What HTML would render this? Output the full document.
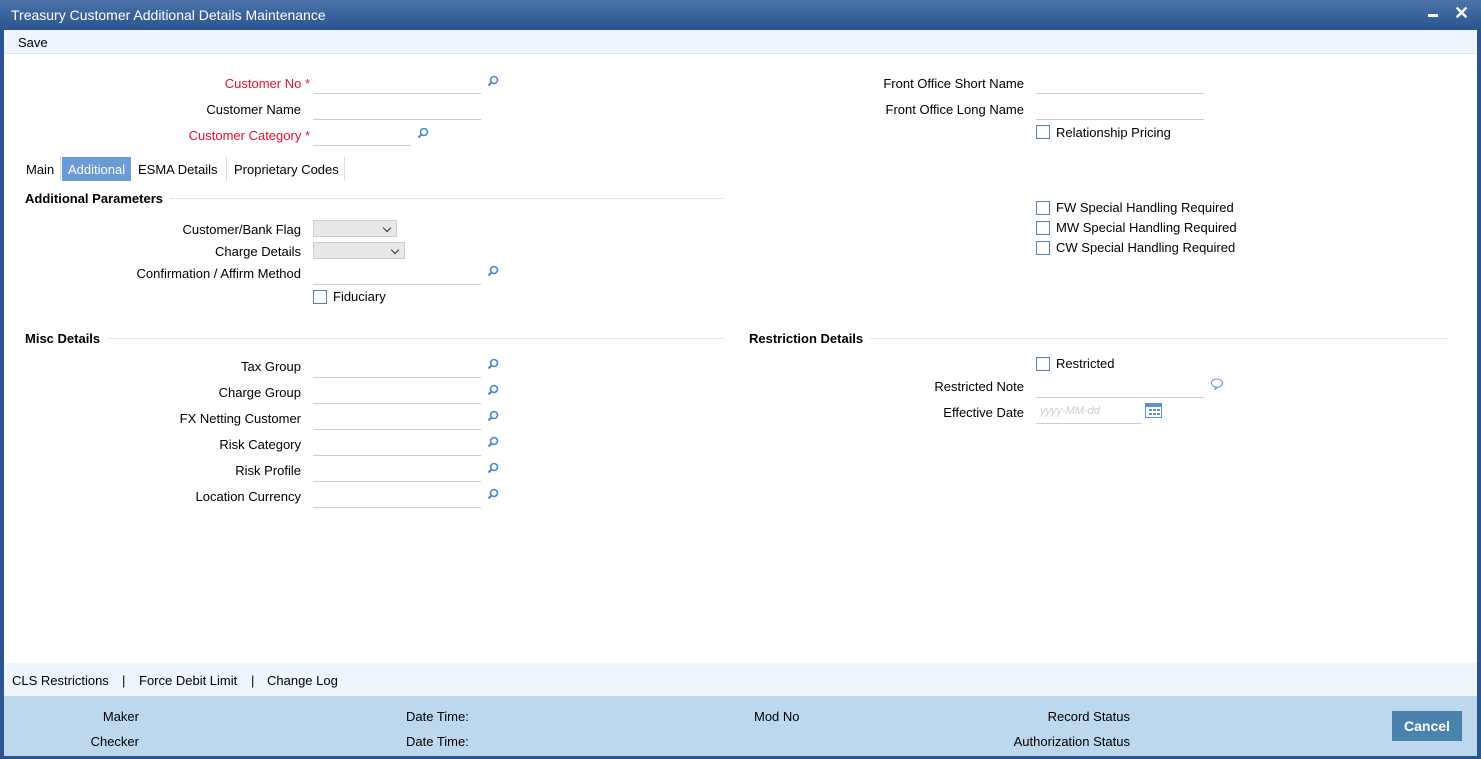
<!DOCTYPE html>
<html><head><style>
*{margin:0;padding:0;box-sizing:border-box}
body{width:1481px;height:759px;overflow:hidden;background:#fff;font-family:"Liberation Sans",Arial,sans-serif;font-size:13px;color:#000;position:relative}
.a{position:absolute;white-space:nowrap}
.r{text-align:right}
.red{color:#e8112d}
.inp{position:absolute;height:1px;background:#ccc}
.cb{position:absolute;width:14px;height:14px;border:1px solid #5a7ea8;background:#fff}
.sel{position:absolute;height:17px;border:1px solid #ccc;background:#e8e8e8}
.sel:after{content:"";position:absolute;right:6px;top:4px;width:5px;height:5px;border-right:1.5px solid #333;border-bottom:1.5px solid #333;transform:rotate(45deg)}
.hd{position:absolute;font-weight:bold;font-size:13px}
.ln{position:absolute;height:1px;background:#e3e3e3}
</style></head><body>
<div class="a" style="left:0;top:0;width:1481px;height:30px;background:linear-gradient(#4a72a8,#2c5590)"></div>
<div class="a" style="left:11px;top:7px;color:#fff;font-size:14px">Treasury Customer Additional Details Maintenance</div>
<div class="a" style="left:1428px;top:14px;width:10px;height:3px;background:#fff"></div>
<div class="a" style="left:1454px;top:3px;color:#fff;font-size:18px;font-weight:bold">✕</div>
<div class="a" style="left:0;top:30px;width:4px;height:729px;background:#2c5590"></div>
<div class="a" style="left:1477px;top:30px;width:4px;height:729px;background:#2c5590"></div>
<div class="a" style="left:0;top:756px;width:1481px;height:3px;background:#2c5590"></div>
<div class="a" style="left:4px;top:30px;width:1473px;height:24px;background:#eef5fd;border-bottom:1px solid #dde6ef"></div>
<div class="a" style="left:18px;top:35px">Save</div>

<svg width="0" height="0" style="position:absolute"><defs><symbol id="s" viewBox="0 0 12 12"><circle cx="7" cy="5" r="3.5" fill="none" stroke="#4a86cf" stroke-width="1.6"/><line x1="4.5" y1="7.5" x2="1.5" y2="10.5" stroke="#4a86cf" stroke-width="2"/></symbol></defs></svg>

<div class="a r red" style="right:1171px;top:76px">Customer No <span>*</span></div>
<div class="inp" style="left:313px;top:93px;width:168px"></div><svg class="a" style="left:487px;top:75px" width="12" height="12"><use href="#s"/></svg>
<div class="a r" style="right:1180px;top:102px">Customer Name</div>
<div class="inp" style="left:313px;top:119px;width:168px"></div>
<div class="a r red" style="right:1171px;top:128px">Customer Category <span>*</span></div>
<div class="inp" style="left:313px;top:145px;width:98px"></div><svg class="a" style="left:417px;top:127px" width="12" height="12"><use href="#s"/></svg>

<div class="a r" style="right:457px;top:76px">Front Office Short Name</div>
<div class="inp" style="left:1036px;top:93px;width:168px"></div>
<div class="a r" style="right:457px;top:102px">Front Office Long Name</div>
<div class="inp" style="left:1036px;top:119px;width:168px"></div>
<div class="cb" style="left:1036px;top:125px"></div><div class="a" style="left:1056px;top:125px">Relationship Pricing</div>

<div class="a" style="left:26px;top:162px">Main</div>
<div class="a" style="left:60px;top:157px;width:1px;height:24px;background:#ddd"></div>
<div class="a" style="left:62px;top:157px;width:69px;height:24px;background:#6a9bd8;color:#fff;padding:5px 0 0 6px">Additional</div>
<div class="a" style="left:138px;top:162px">ESMA Details</div>
<div class="a" style="left:226px;top:157px;width:1px;height:24px;background:#ddd"></div>
<div class="a" style="left:234px;top:162px">Proprietary Codes</div>
<div class="a" style="left:344px;top:157px;width:1px;height:24px;background:#ddd"></div>

<div class="hd" style="left:25px;top:191px">Additional Parameters</div><div class="ln" style="left:170px;top:198px;width:554px"></div>
<div class="a r" style="right:1180px;top:222px">Customer/Bank Flag</div><div class="sel" style="left:313px;top:220px;width:84px"></div>
<div class="a r" style="right:1180px;top:244px">Charge Details</div><div class="sel" style="left:313px;top:242px;width:92px"></div>
<div class="a r" style="right:1180px;top:266px">Confirmation / Affirm Method</div>
<div class="inp" style="left:313px;top:284px;width:168px"></div><svg class="a" style="left:487px;top:265px" width="12" height="12"><use href="#s"/></svg>
<div class="cb" style="left:313px;top:290px"></div><div class="a" style="left:333px;top:289px">Fiduciary</div>

<div class="cb" style="left:1036px;top:201px"></div><div class="a" style="left:1056px;top:200px">FW Special Handling Required</div>
<div class="cb" style="left:1036px;top:221px"></div><div class="a" style="left:1056px;top:220px">MW Special Handling Required</div>
<div class="cb" style="left:1036px;top:241px"></div><div class="a" style="left:1056px;top:240px">CW Special Handling Required</div>

<div class="hd" style="left:25px;top:331px">Misc Details</div><div class="ln" style="left:108px;top:338px;width:616px"></div>
<div class="hd" style="left:749px;top:331px">Restriction Details</div><div class="ln" style="left:870px;top:338px;width:578px"></div>

<div class="a r" style="right:1180px;top:359px">Tax Group</div><div class="inp" style="left:313px;top:377px;width:168px"></div><svg class="a" style="left:487px;top:358px" width="12" height="12"><use href="#s"/></svg>
<div class="a r" style="right:1180px;top:385px">Charge Group</div><div class="inp" style="left:313px;top:403px;width:168px"></div><svg class="a" style="left:487px;top:384px" width="12" height="12"><use href="#s"/></svg>
<div class="a r" style="right:1180px;top:411px">FX Netting Customer</div><div class="inp" style="left:313px;top:429px;width:168px"></div><svg class="a" style="left:487px;top:410px" width="12" height="12"><use href="#s"/></svg>
<div class="a r" style="right:1180px;top:437px">Risk Category</div><div class="inp" style="left:313px;top:455px;width:168px"></div><svg class="a" style="left:487px;top:436px" width="12" height="12"><use href="#s"/></svg>
<div class="a r" style="right:1180px;top:463px">Risk Profile</div><div class="inp" style="left:313px;top:481px;width:168px"></div><svg class="a" style="left:487px;top:462px" width="12" height="12"><use href="#s"/></svg>
<div class="a r" style="right:1180px;top:489px">Location Currency</div><div class="inp" style="left:313px;top:507px;width:168px"></div><svg class="a" style="left:487px;top:488px" width="12" height="12"><use href="#s"/></svg>

<div class="cb" style="left:1036px;top:357px"></div><div class="a" style="left:1056px;top:356px">Restricted</div>
<div class="a r" style="right:457px;top:379px">Restricted Note</div><div class="inp" style="left:1036px;top:397px;width:168px"></div>
<svg class="a" style="left:1210px;top:378px" width="14" height="12" viewBox="0 0 14 12"><path d="M7 1C3.7 1 1.5 2.8 1.5 5s2 4 5 4l-2 2.5 4-2.5c2.5-.5 4-2 4-4 0-2.2-2.2-4-5.5-4z" fill="none" stroke="#6a9bd8" stroke-width="1.1"/></svg>
<div class="a r" style="right:457px;top:405px">Effective Date</div>
<div class="a" style="left:1040px;top:405px;color:#ccc;font-style:italic;font-size:11px">yyyy-MM-dd</div>
<div class="inp" style="left:1036px;top:423px;width:105px"></div>
<svg class="a" style="left:1145px;top:403px" width="17" height="15"><rect width="17" height="15" fill="#5d8fd1"/><rect x="1" y="4" width="15" height="10" fill="#fff"/><g fill="#5d8fd1"><rect x="4" y="6" width="3" height="2"/><rect x="8" y="6" width="3" height="2"/><rect x="12" y="6" width="3" height="2"/><rect x="4" y="10" width="3" height="2"/><rect x="8" y="10" width="3" height="2"/><rect x="12" y="10" width="3" height="2"/></g></svg>

<div class="a" style="left:4px;top:663px;width:1473px;height:33px;background:#eef5fd"></div>
<div class="a" style="left:12px;top:673px">CLS Restrictions</div>
<div class="a" style="left:122px;top:673px">|</div>
<div class="a" style="left:139px;top:673px">Force Debit Limit</div>
<div class="a" style="left:251px;top:673px">|</div>
<div class="a" style="left:267px;top:673px">Change Log</div>
<div class="a" style="left:4px;top:696px;width:1473px;height:60px;background:#bdd8ec"></div>
<div class="a r" style="right:1342px;top:709px">Maker</div>
<div class="a r" style="right:1342px;top:734px">Checker</div>
<div class="a" style="left:406px;top:709px">Date Time:</div>
<div class="a" style="left:406px;top:734px">Date Time:</div>
<div class="a" style="left:754px;top:709px">Mod No</div>
<div class="a r" style="right:351px;top:709px">Record Status</div>
<div class="a r" style="right:351px;top:734px">Authorization Status</div>
<div class="a" style="left:1392px;top:711px;width:70px;height:30px;background:#4a82ae;color:#fff;font-weight:bold;font-size:14px;text-align:center;line-height:30px">Cancel</div>
</body></html>
